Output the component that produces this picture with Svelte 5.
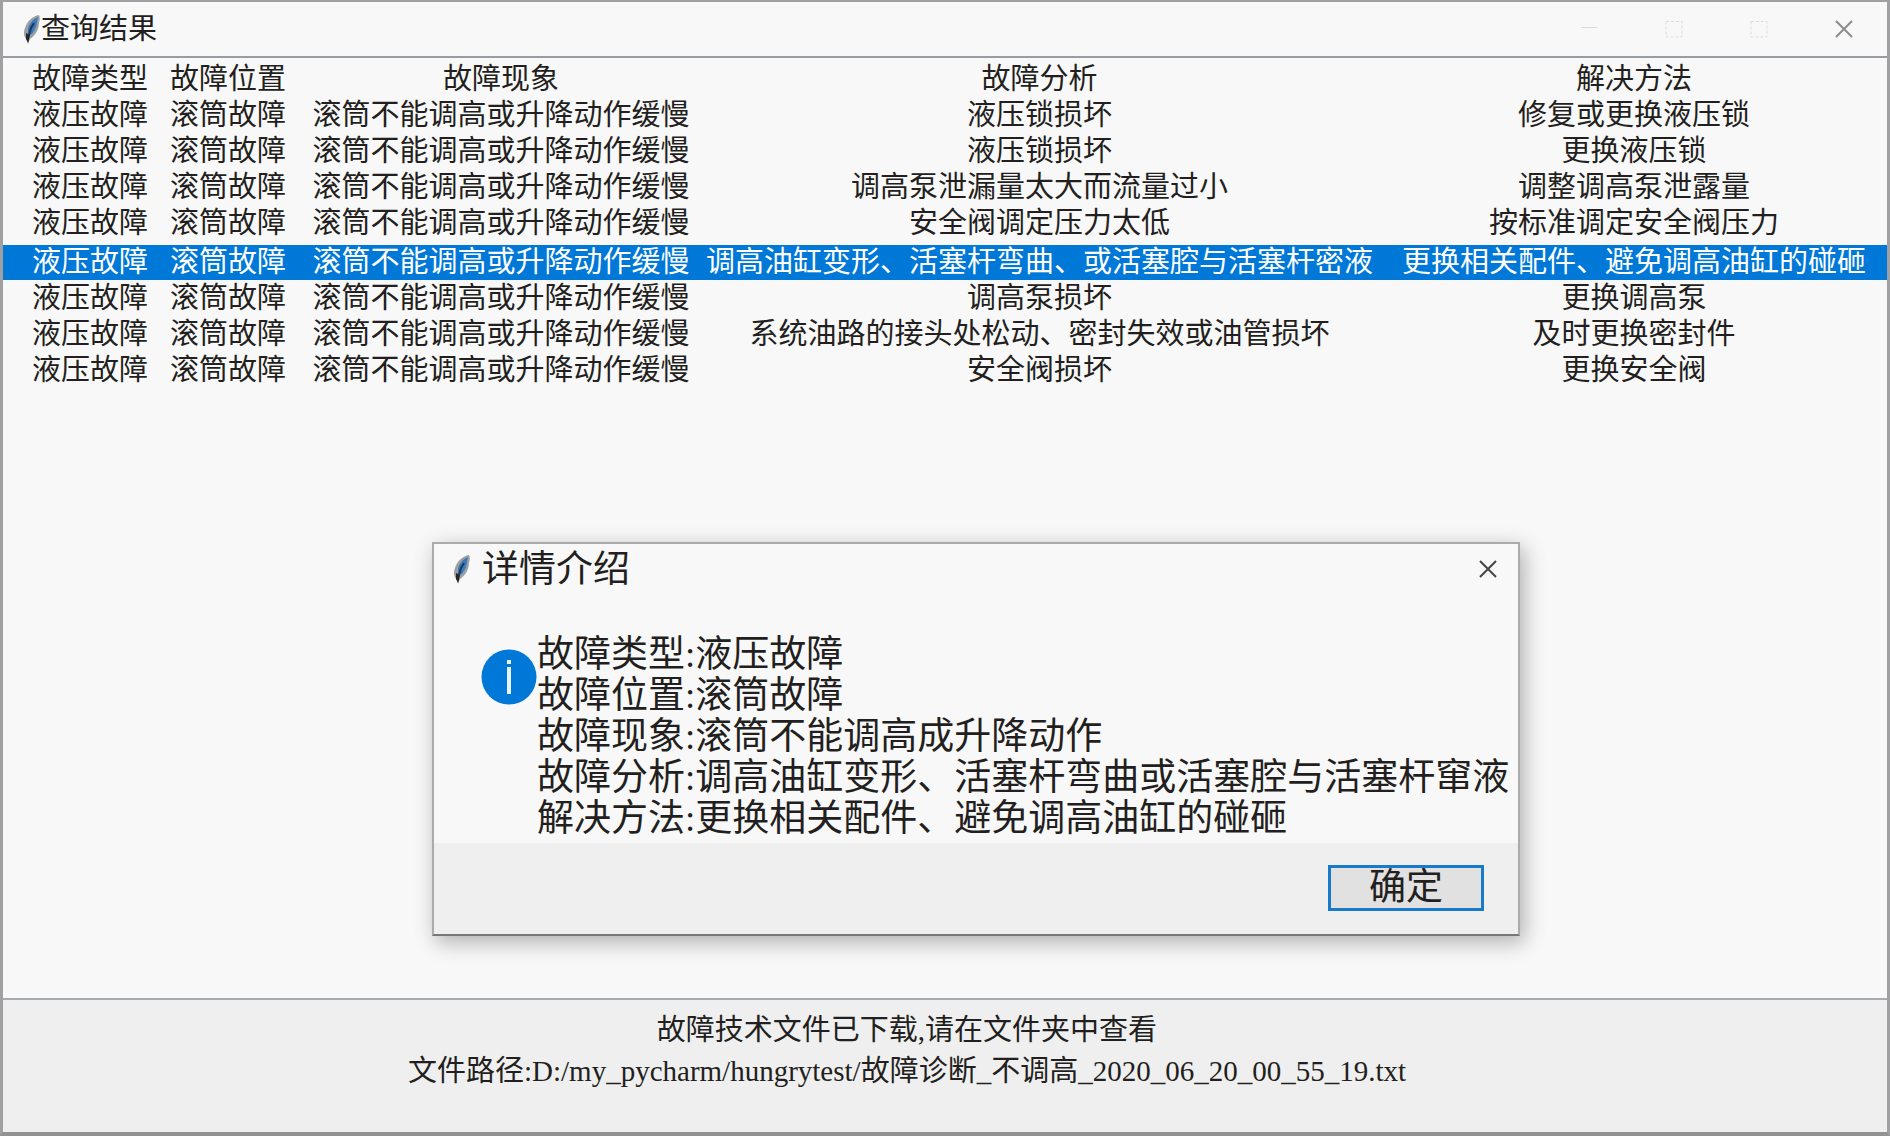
<script lang="ts">
  type Fault = { analysis: string; solution: string };

  const kind = '液压故障';
  const place = '滚筒故障';
  const symptom = '滚筒不能调高或升降动作缓慢';

  const faults: Fault[] = [
    { analysis: '液压锁损坏', solution: '修复或更换液压锁' },
    { analysis: '液压锁损坏', solution: '更换液压锁' },
    { analysis: '调高泵泄漏量太大而流量过小', solution: '调整调高泵泄露量' },
    { analysis: '安全阀调定压力太低', solution: '按标准调定安全阀压力' },
    {
      analysis: '调高油缸变形、活塞杆弯曲、或活塞腔与活塞杆密液',
      solution: '更换相关配件、避免调高油缸的碰砸',
    },
    { analysis: '调高泵损坏', solution: '更换调高泵' },
    { analysis: '系统油路的接头处松动、密封失效或油管损坏', solution: '及时更换密封件' },
    { analysis: '安全阀损坏', solution: '更换安全阀' },
  ];

  const details = [
    '故障类型:液压故障',
    '故障位置:滚筒故障',
    '故障现象:滚筒不能调高成升降动作',
    '故障分析:调高油缸变形、活塞杆弯曲或活塞腔与活塞杆窜液',
    '解决方法:更换相关配件、避免调高油缸的碰砸',
  ];

  const selected = 4;
  let dialogOpen = $state(true);

  function closeDialog() {
    dialogOpen = false;
  }
</script>

{#snippet feather()}
  <svg class="feather" viewBox="0 0 18 29" aria-hidden="true">
    <path d="M16 0C10 1 4 6 2 13C0 18 1 22 4 25L5 29L7 24C12 21 16 14 16 8C17 5 17 2 16 0Z" fill="#9aa0a4" />
    <path d="M15 2C10 4 6 9 5 14L5 20L9 19C12 15 14 10 14 7Z" fill="#3f78b8" />
    <path d="M11 8L8 13L6 20" fill="none" stroke="#173a63" stroke-width="2" />
    <path d="M3 18L7 20L6 25L5 28L3 24Z" fill="#25282b" />
  </svg>
{/snippet}

{#snippet cross()}
  <svg class="glyph" viewBox="0 0 18 18" aria-hidden="true">
    <path d="M1 1L17 17M17 1L1 17" />
  </svg>
{/snippet}

<div class="window">
  <header class="titlebar">
    {@render feather()}
    <h1>查询结果</h1>
    <div class="controls">
      <button type="button" class="faint" aria-label="最小化">
        <svg class="glyph" viewBox="0 0 18 18" aria-hidden="true"><path d="M1 7.500H17" /></svg>
      </button>
      {#each ['最大化', '还原'] as label}
        <button type="button" class="faint" aria-label={label}>
          <svg class="glyph" viewBox="0 0 18 18" aria-hidden="true">
            <path d="M1 1.500H17V17H1Z" stroke-dasharray="3 2" />
          </svg>
        </button>
      {/each}
      <button type="button" class="close" aria-label="关闭">{@render cross()}</button>
    </div>
  </header>

  <main>
    <table>
      <colgroup>
        <col class="kind" />
        <col class="place" />
        <col class="symptom" />
        <col />
        <col class="solution" />
      </colgroup>
      <thead>
        <tr>
          <th>故障类型</th>
          <th>故障位置</th>
          <th>故障现象</th>
          <th>故障分析</th>
          <th>解决方法</th>
        </tr>
      </thead>
      <tbody>
        {#each faults as fault, i}
          <tr class:selected={i === selected}>
            <td>{kind}</td>
            <td>{place}</td>
            <td>{symptom}</td>
            <td>{fault.analysis}</td>
            <td>{fault.solution}</td>
          </tr>
        {/each}
      </tbody>
    </table>
  </main>

  <footer>
    <p>故障技术文件已下载,请在文件夹中查看</p>
    <p>文件路径:D:/my_pycharm/hungrytest/故障诊断_不调高_2020_06_20_00_55_19.txt</p>
  </footer>

  {#if dialogOpen}
    <div class="dialog" role="dialog" aria-labelledby="dialog-title">
      <div class="dialog-bar">
        {@render feather()}
        <h2 id="dialog-title">详情介绍</h2>
        <button type="button" class="dialog-close" aria-label="关闭" onclick={closeDialog}>
          {@render cross()}
        </button>
      </div>
      <div class="dialog-body">
        <svg class="info" viewBox="0 0 56 56" aria-hidden="true">
          <circle cx="28" cy="28" r="27.500" fill="#0078d7" />
          <path d="M28 11V15M28 18V45" stroke="#e8f4ff" stroke-width="4" />
        </svg>
        <div>
          {#each details as line}
            <p>{line}</p>
          {/each}
        </div>
      </div>
      <div class="dialog-actions">
        <button type="button" class="ok" onclick={closeDialog}>确定</button>
      </div>
    </div>
  {/if}
</div>

<style>
  :global(body) {
    margin: 0;
    background: #f8f8f8;
  }
  h1,
  h2,
  p {
    margin: 0;
    font-weight: inherit;
    font-size: inherit;
  }
  button {
    padding: 0;
    border: 0;
    background: none;
    color: inherit;
    font: inherit;
  }
  .window {
    position: relative;
    box-sizing: border-box;
    display: flex;
    flex-direction: column;
    min-height: 100vh;
    border: 3px solid #a0a0a3;
    border-top-width: 2px;
    border-bottom: 4px solid #929292;
    background: #f8f8f8;
    color: #231f20;
    font-family: 'Liberation Serif', 'Noto Sans CJK SC', serif;
    font-size: 29px;
  }
  .titlebar {
    display: flex;
    align-items: center;
    height: 54px;
    padding-left: 20px;
    border-bottom: 2px solid #989da2;
  }
  .titlebar h1 {
    flex: 1;
    line-height: 36px;
  }
  .feather {
    width: 18px;
    height: 29px;
  }
  .glyph {
    display: block;
    width: 18px;
    height: 18px;
    margin: auto;
    fill: none;
    stroke: currentColor;
    stroke-width: 1;
  }
  .controls {
    display: flex;
    padding-right: 1px;
  }
  .controls button {
    width: 85px;
    height: 54px;
  }
  .faint {
    color: #dcdcdc;
  }
  .close {
    color: #8c8c8c;
  }
  .controls .close .glyph,
  .dialog-close .glyph {
    stroke-width: 2;
  }
  main {
    flex: 1;
    padding-top: 2px;
  }
  table {
    width: 100%;
    table-layout: fixed;
    border-spacing: 0;
  }
  .kind {
    width: 156px;
  }
  .place {
    width: 138px;
  }
  .symptom {
    width: 408px;
  }
  .solution {
    width: 513px;
  }
  th,
  td {
    height: 36px;
    padding: 0;
    line-height: 36px;
    font-weight: inherit;
    text-align: center;
    white-space: nowrap;
  }
  th {
    height: 37px;
  }
  th:first-child,
  td:first-child {
    padding-left: 18px;
  }
  th:last-child,
  td:last-child {
    padding-left: 7px;
  }
  .selected td {
    height: 35px;
    border-top: 4px solid transparent;
    background: #0078d7;
    background-clip: padding-box;
    color: #fff;
    line-height: 35px;
  }
  footer {
    height: 120px;
    padding: 10px 76px 2px 0;
    border-top: 2px solid #a5abaf;
    background: #efefef;
    line-height: 41px;
    text-align: center;
  }
  .dialog {
    position: absolute;
    top: 540px;
    left: 429px;
    width: 1084px;
    border: 2px solid #ababab;
    border-bottom-color: #777;
    background: #f8f8f8;
    box-shadow: 4px 6px 20px rgb(0 0 0 / 30%);
    font-size: 37px;
    line-height: 41px;
  }
  .dialog-bar {
    display: flex;
    align-items: center;
    height: 50px;
    padding: 0 21px 0 19px;
  }
  .dialog-bar h2 {
    flex: 1;
    padding-left: 11px;
  }
  .dialog-close {
    width: 18px;
    height: 18px;
    color: #444;
  }
  .dialog-body {
    display: flex;
    padding: 40px 0 4px 47px;
    white-space: nowrap;
  }
  .info {
    flex: none;
    width: 56px;
    height: 56px;
    margin-top: 15px;
  }
  .dialog-actions {
    display: flex;
    justify-content: flex-end;
    padding: 22px 34px 23px;
    background: #efefef;
  }
  .ok {
    box-sizing: border-box;
    width: 156px;
    height: 46px;
    border: 3px solid #1979ca;
    background: #e1e1e1;
    line-height: 40px;
  }
</style>
